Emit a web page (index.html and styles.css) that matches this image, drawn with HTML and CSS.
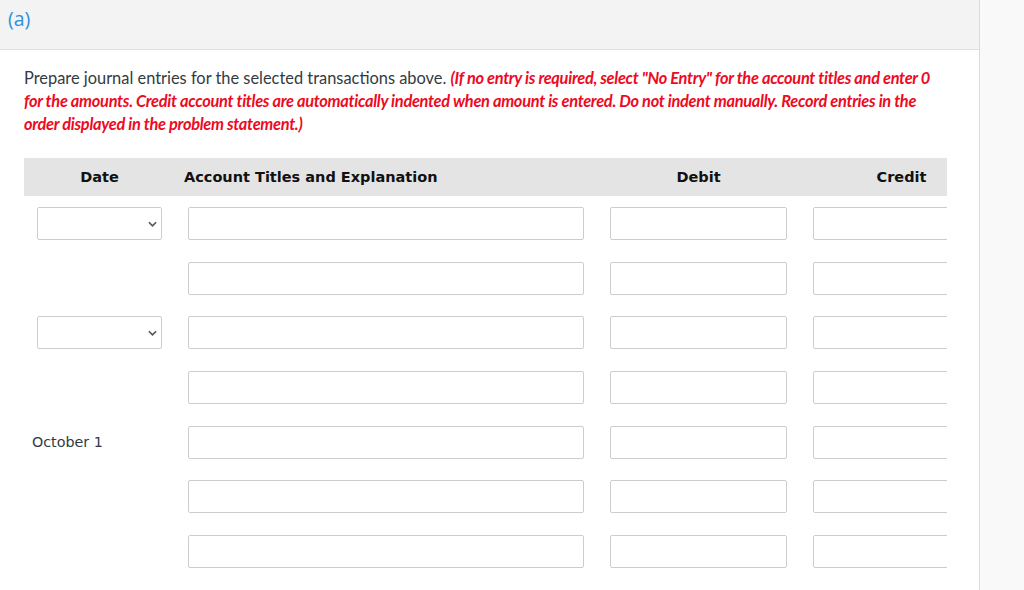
FILE: index.html
```html
<!DOCTYPE html>
<html>
<head>
<meta charset="utf-8">
<link rel="stylesheet" href="styles.css">
</head>
<body>
<div class="page">
  <main class="main">
    <header class="part-head"><span class="part-label">(a)</span></header>
    <section class="content">
      <p class="prompt">Prepare journal entries for the selected transactions above. <em class="note">(If no entry is required, select "No Entry" for the account titles and enter 0 for the amounts. Credit account titles are automatically indented when amount is entered. Do not indent manually. Record entries in the order displayed in the problem statement.)</em></p>
      <div class="journal">
        <div class="jrow jhead">
          <div class="c-date">Date</div>
          <div class="c-acct">Account Titles and Explanation</div>
          <div class="c-num">Debit</div>
          <div class="c-num">Credit</div>
        </div>
        <div class="jrow first">
          <div class="c-date"><div class="sel"><svg class="chev" viewBox="0 0 10 6" width="9" height="6"><path d="M1 1 L5 5 L9 1" fill="none" stroke="#555" stroke-width="1.8"/></svg></div></div>
          <div class="c-acct"><div class="box"></div></div>
          <div class="c-num"><div class="box"></div></div>
          <div class="c-num"><div class="box"></div></div>
        </div>
        <div class="jrow">
          <div class="c-date"></div>
          <div class="c-acct"><div class="box"></div></div>
          <div class="c-num"><div class="box"></div></div>
          <div class="c-num"><div class="box"></div></div>
        </div>
        <div class="jrow">
          <div class="c-date"><div class="sel"><svg class="chev" viewBox="0 0 10 6" width="9" height="6"><path d="M1 1 L5 5 L9 1" fill="none" stroke="#555" stroke-width="1.8"/></svg></div></div>
          <div class="c-acct"><div class="box"></div></div>
          <div class="c-num"><div class="box"></div></div>
          <div class="c-num"><div class="box"></div></div>
        </div>
        <div class="jrow">
          <div class="c-date"></div>
          <div class="c-acct"><div class="box"></div></div>
          <div class="c-num"><div class="box"></div></div>
          <div class="c-num"><div class="box"></div></div>
        </div>
        <div class="jrow">
          <div class="c-date"><span class="date-text">October 1</span></div>
          <div class="c-acct"><div class="box"></div></div>
          <div class="c-num"><div class="box"></div></div>
          <div class="c-num"><div class="box"></div></div>
        </div>
        <div class="jrow">
          <div class="c-date"></div>
          <div class="c-acct"><div class="box"></div></div>
          <div class="c-num"><div class="box"></div></div>
          <div class="c-num"><div class="box"></div></div>
        </div>
        <div class="jrow">
          <div class="c-date"></div>
          <div class="c-acct"><div class="box"></div></div>
          <div class="c-num"><div class="box"></div></div>
          <div class="c-num"><div class="box"></div></div>
        </div>
      </div>
    </section>
  </main>
  <aside class="side"></aside>
</div>
</body>
</html>
```
FILE: styles.css
```css
* { box-sizing: border-box; }
html, body { margin: 0; padding: 0; background: #fff; }
body { width: 1024px; height: 590px; overflow: hidden; }
.page { display: flex; height: 590px; }
.main { width: 979px; flex: none; overflow: hidden; }
.side { flex: 1; background: #f9f9f9; border-left: 1px solid #dcdcdc; }

.part-head {
  height: 50px;
  background: #f3f3f3;
  border-bottom: 1px solid #e0e0e0;
  padding: 5px 0 0 8px;
}
.part-label {
  font-family: "Open Sans", Lato, sans-serif;
  font-size: 19.5px;
  color: #2b8fe0;
}

.content { padding: 16px 20px 0 24px; }
.prompt {
  margin: 0;
  width: 916px;
  font-family: Lato, sans-serif;
  font-size: 16.4px;
  line-height: 23px;
  color: #333a42;
}
.note {
  font-style: italic;
  font-weight: 700;
  color: #ed0a22;
  letter-spacing: -0.3px;
}

.journal {
  margin-top: 23px;
  width: 923px;
  overflow: hidden;
}
.jrow {
  display: grid;
  grid-template-columns: 151px 422px 203px 203px;
  width: 979px;
  height: 54.67px;
  align-items: start;
}
.jrow.first { margin-top: 11px; }
.jhead {
  height: 38px;
  align-items: center;
  background: #e4e4e4;
  font-family: "DejaVu Sans", Verdana, sans-serif;
  font-weight: 700;
  font-size: 14.5px;
  color: #111;
}
.jhead .c-date, .jhead .c-num { text-align: center; }
.jhead .c-acct { padding-left: 9px; }
.jhead .c-date { padding-left: 0; }
.c-date { padding-left: 13px; }
.c-acct, .c-num { padding: 0 13px; }
.box, .sel {
  height: 33px;
  border: 1px solid #cdcdcd;
  border-radius: 2px;
  background: #fff;
}
.c-num .box { width: 177px; }
.sel {
  width: 125px;
  display: flex;
  align-items: center;
  justify-content: flex-end;
  padding-right: 4px;
}
.chev { display: block; }
.date-text {
  display: block;
  margin-left: -5px;
  line-height: 33px;
  font-family: "DejaVu Sans", Verdana, sans-serif;
  font-size: 14.3px;
  color: #2f3a45;
}
```
